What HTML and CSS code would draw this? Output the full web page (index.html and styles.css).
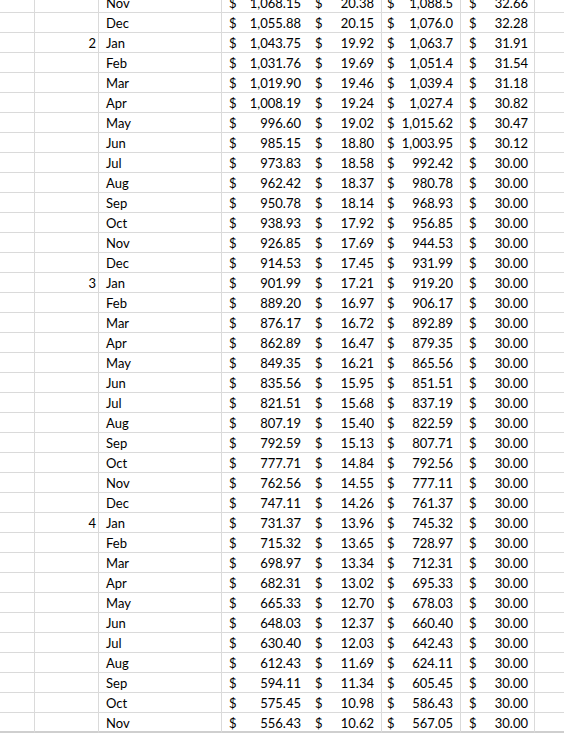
FILE: index.html
```html
<!DOCTYPE html>
<html>
<head>
<meta charset="utf-8">
<link rel="stylesheet" href="styles.css">
</head>
<body>
<div class="sheet">
  <div class="row first"><div class="c a"></div><div class="c b"></div><div class="c m">Nov</div><div class="c d"><span>$</span><span>1,068.15</span></div><div class="c e"><span>$</span><span>20.38</span></div><div class="c f"><span>$</span><span>1,088.5</span></div><div class="c g"><span>$</span><span>32.66</span></div><div class="c h"></div></div>
  <div class="row"><div class="c a"></div><div class="c b"></div><div class="c m">Dec</div><div class="c d"><span>$</span><span>1,055.88</span></div><div class="c e"><span>$</span><span>20.15</span></div><div class="c f"><span>$</span><span>1,076.0</span></div><div class="c g"><span>$</span><span>32.28</span></div><div class="c h"></div></div>
  <div class="row"><div class="c a"></div><div class="c b">2</div><div class="c m">Jan</div><div class="c d"><span>$</span><span>1,043.75</span></div><div class="c e"><span>$</span><span>19.92</span></div><div class="c f"><span>$</span><span>1,063.7</span></div><div class="c g"><span>$</span><span>31.91</span></div><div class="c h"></div></div>
  <div class="row"><div class="c a"></div><div class="c b"></div><div class="c m">Feb</div><div class="c d"><span>$</span><span>1,031.76</span></div><div class="c e"><span>$</span><span>19.69</span></div><div class="c f"><span>$</span><span>1,051.4</span></div><div class="c g"><span>$</span><span>31.54</span></div><div class="c h"></div></div>
  <div class="row"><div class="c a"></div><div class="c b"></div><div class="c m">Mar</div><div class="c d"><span>$</span><span>1,019.90</span></div><div class="c e"><span>$</span><span>19.46</span></div><div class="c f"><span>$</span><span>1,039.4</span></div><div class="c g"><span>$</span><span>31.18</span></div><div class="c h"></div></div>
  <div class="row"><div class="c a"></div><div class="c b"></div><div class="c m">Apr</div><div class="c d"><span>$</span><span>1,008.19</span></div><div class="c e"><span>$</span><span>19.24</span></div><div class="c f"><span>$</span><span>1,027.4</span></div><div class="c g"><span>$</span><span>30.82</span></div><div class="c h"></div></div>
  <div class="row"><div class="c a"></div><div class="c b"></div><div class="c m">May</div><div class="c d"><span>$</span><span>996.60</span></div><div class="c e"><span>$</span><span>19.02</span></div><div class="c f"><span>$</span><span>1,015.62</span></div><div class="c g"><span>$</span><span>30.47</span></div><div class="c h"></div></div>
  <div class="row"><div class="c a"></div><div class="c b"></div><div class="c m">Jun</div><div class="c d"><span>$</span><span>985.15</span></div><div class="c e"><span>$</span><span>18.80</span></div><div class="c f"><span>$</span><span>1,003.95</span></div><div class="c g"><span>$</span><span>30.12</span></div><div class="c h"></div></div>
  <div class="row"><div class="c a"></div><div class="c b"></div><div class="c m">Jul</div><div class="c d"><span>$</span><span>973.83</span></div><div class="c e"><span>$</span><span>18.58</span></div><div class="c f"><span>$</span><span>992.42</span></div><div class="c g"><span>$</span><span>30.00</span></div><div class="c h"></div></div>
  <div class="row"><div class="c a"></div><div class="c b"></div><div class="c m">Aug</div><div class="c d"><span>$</span><span>962.42</span></div><div class="c e"><span>$</span><span>18.37</span></div><div class="c f"><span>$</span><span>980.78</span></div><div class="c g"><span>$</span><span>30.00</span></div><div class="c h"></div></div>
  <div class="row"><div class="c a"></div><div class="c b"></div><div class="c m">Sep</div><div class="c d"><span>$</span><span>950.78</span></div><div class="c e"><span>$</span><span>18.14</span></div><div class="c f"><span>$</span><span>968.93</span></div><div class="c g"><span>$</span><span>30.00</span></div><div class="c h"></div></div>
  <div class="row"><div class="c a"></div><div class="c b"></div><div class="c m">Oct</div><div class="c d"><span>$</span><span>938.93</span></div><div class="c e"><span>$</span><span>17.92</span></div><div class="c f"><span>$</span><span>956.85</span></div><div class="c g"><span>$</span><span>30.00</span></div><div class="c h"></div></div>
  <div class="row"><div class="c a"></div><div class="c b"></div><div class="c m">Nov</div><div class="c d"><span>$</span><span>926.85</span></div><div class="c e"><span>$</span><span>17.69</span></div><div class="c f"><span>$</span><span>944.53</span></div><div class="c g"><span>$</span><span>30.00</span></div><div class="c h"></div></div>
  <div class="row"><div class="c a"></div><div class="c b"></div><div class="c m">Dec</div><div class="c d"><span>$</span><span>914.53</span></div><div class="c e"><span>$</span><span>17.45</span></div><div class="c f"><span>$</span><span>931.99</span></div><div class="c g"><span>$</span><span>30.00</span></div><div class="c h"></div></div>
  <div class="row"><div class="c a"></div><div class="c b">3</div><div class="c m">Jan</div><div class="c d"><span>$</span><span>901.99</span></div><div class="c e"><span>$</span><span>17.21</span></div><div class="c f"><span>$</span><span>919.20</span></div><div class="c g"><span>$</span><span>30.00</span></div><div class="c h"></div></div>
  <div class="row"><div class="c a"></div><div class="c b"></div><div class="c m">Feb</div><div class="c d"><span>$</span><span>889.20</span></div><div class="c e"><span>$</span><span>16.97</span></div><div class="c f"><span>$</span><span>906.17</span></div><div class="c g"><span>$</span><span>30.00</span></div><div class="c h"></div></div>
  <div class="row"><div class="c a"></div><div class="c b"></div><div class="c m">Mar</div><div class="c d"><span>$</span><span>876.17</span></div><div class="c e"><span>$</span><span>16.72</span></div><div class="c f"><span>$</span><span>892.89</span></div><div class="c g"><span>$</span><span>30.00</span></div><div class="c h"></div></div>
  <div class="row"><div class="c a"></div><div class="c b"></div><div class="c m">Apr</div><div class="c d"><span>$</span><span>862.89</span></div><div class="c e"><span>$</span><span>16.47</span></div><div class="c f"><span>$</span><span>879.35</span></div><div class="c g"><span>$</span><span>30.00</span></div><div class="c h"></div></div>
  <div class="row"><div class="c a"></div><div class="c b"></div><div class="c m">May</div><div class="c d"><span>$</span><span>849.35</span></div><div class="c e"><span>$</span><span>16.21</span></div><div class="c f"><span>$</span><span>865.56</span></div><div class="c g"><span>$</span><span>30.00</span></div><div class="c h"></div></div>
  <div class="row"><div class="c a"></div><div class="c b"></div><div class="c m">Jun</div><div class="c d"><span>$</span><span>835.56</span></div><div class="c e"><span>$</span><span>15.95</span></div><div class="c f"><span>$</span><span>851.51</span></div><div class="c g"><span>$</span><span>30.00</span></div><div class="c h"></div></div>
  <div class="row"><div class="c a"></div><div class="c b"></div><div class="c m">Jul</div><div class="c d"><span>$</span><span>821.51</span></div><div class="c e"><span>$</span><span>15.68</span></div><div class="c f"><span>$</span><span>837.19</span></div><div class="c g"><span>$</span><span>30.00</span></div><div class="c h"></div></div>
  <div class="row"><div class="c a"></div><div class="c b"></div><div class="c m">Aug</div><div class="c d"><span>$</span><span>807.19</span></div><div class="c e"><span>$</span><span>15.40</span></div><div class="c f"><span>$</span><span>822.59</span></div><div class="c g"><span>$</span><span>30.00</span></div><div class="c h"></div></div>
  <div class="row"><div class="c a"></div><div class="c b"></div><div class="c m">Sep</div><div class="c d"><span>$</span><span>792.59</span></div><div class="c e"><span>$</span><span>15.13</span></div><div class="c f"><span>$</span><span>807.71</span></div><div class="c g"><span>$</span><span>30.00</span></div><div class="c h"></div></div>
  <div class="row"><div class="c a"></div><div class="c b"></div><div class="c m">Oct</div><div class="c d"><span>$</span><span>777.71</span></div><div class="c e"><span>$</span><span>14.84</span></div><div class="c f"><span>$</span><span>792.56</span></div><div class="c g"><span>$</span><span>30.00</span></div><div class="c h"></div></div>
  <div class="row"><div class="c a"></div><div class="c b"></div><div class="c m">Nov</div><div class="c d"><span>$</span><span>762.56</span></div><div class="c e"><span>$</span><span>14.55</span></div><div class="c f"><span>$</span><span>777.11</span></div><div class="c g"><span>$</span><span>30.00</span></div><div class="c h"></div></div>
  <div class="row"><div class="c a"></div><div class="c b"></div><div class="c m">Dec</div><div class="c d"><span>$</span><span>747.11</span></div><div class="c e"><span>$</span><span>14.26</span></div><div class="c f"><span>$</span><span>761.37</span></div><div class="c g"><span>$</span><span>30.00</span></div><div class="c h"></div></div>
  <div class="row"><div class="c a"></div><div class="c b">4</div><div class="c m">Jan</div><div class="c d"><span>$</span><span>731.37</span></div><div class="c e"><span>$</span><span>13.96</span></div><div class="c f"><span>$</span><span>745.32</span></div><div class="c g"><span>$</span><span>30.00</span></div><div class="c h"></div></div>
  <div class="row"><div class="c a"></div><div class="c b"></div><div class="c m">Feb</div><div class="c d"><span>$</span><span>715.32</span></div><div class="c e"><span>$</span><span>13.65</span></div><div class="c f"><span>$</span><span>728.97</span></div><div class="c g"><span>$</span><span>30.00</span></div><div class="c h"></div></div>
  <div class="row"><div class="c a"></div><div class="c b"></div><div class="c m">Mar</div><div class="c d"><span>$</span><span>698.97</span></div><div class="c e"><span>$</span><span>13.34</span></div><div class="c f"><span>$</span><span>712.31</span></div><div class="c g"><span>$</span><span>30.00</span></div><div class="c h"></div></div>
  <div class="row"><div class="c a"></div><div class="c b"></div><div class="c m">Apr</div><div class="c d"><span>$</span><span>682.31</span></div><div class="c e"><span>$</span><span>13.02</span></div><div class="c f"><span>$</span><span>695.33</span></div><div class="c g"><span>$</span><span>30.00</span></div><div class="c h"></div></div>
  <div class="row"><div class="c a"></div><div class="c b"></div><div class="c m">May</div><div class="c d"><span>$</span><span>665.33</span></div><div class="c e"><span>$</span><span>12.70</span></div><div class="c f"><span>$</span><span>678.03</span></div><div class="c g"><span>$</span><span>30.00</span></div><div class="c h"></div></div>
  <div class="row"><div class="c a"></div><div class="c b"></div><div class="c m">Jun</div><div class="c d"><span>$</span><span>648.03</span></div><div class="c e"><span>$</span><span>12.37</span></div><div class="c f"><span>$</span><span>660.40</span></div><div class="c g"><span>$</span><span>30.00</span></div><div class="c h"></div></div>
  <div class="row"><div class="c a"></div><div class="c b"></div><div class="c m">Jul</div><div class="c d"><span>$</span><span>630.40</span></div><div class="c e"><span>$</span><span>12.03</span></div><div class="c f"><span>$</span><span>642.43</span></div><div class="c g"><span>$</span><span>30.00</span></div><div class="c h"></div></div>
  <div class="row"><div class="c a"></div><div class="c b"></div><div class="c m">Aug</div><div class="c d"><span>$</span><span>612.43</span></div><div class="c e"><span>$</span><span>11.69</span></div><div class="c f"><span>$</span><span>624.11</span></div><div class="c g"><span>$</span><span>30.00</span></div><div class="c h"></div></div>
  <div class="row"><div class="c a"></div><div class="c b"></div><div class="c m">Sep</div><div class="c d"><span>$</span><span>594.11</span></div><div class="c e"><span>$</span><span>11.34</span></div><div class="c f"><span>$</span><span>605.45</span></div><div class="c g"><span>$</span><span>30.00</span></div><div class="c h"></div></div>
  <div class="row"><div class="c a"></div><div class="c b"></div><div class="c m">Oct</div><div class="c d"><span>$</span><span>575.45</span></div><div class="c e"><span>$</span><span>10.98</span></div><div class="c f"><span>$</span><span>586.43</span></div><div class="c g"><span>$</span><span>30.00</span></div><div class="c h"></div></div>
  <div class="row last"><div class="c a"></div><div class="c b"></div><div class="c m">Nov</div><div class="c d"><span>$</span><span>556.43</span></div><div class="c e"><span>$</span><span>10.62</span></div><div class="c f"><span>$</span><span>567.05</span></div><div class="c g"><span>$</span><span>30.00</span></div><div class="c h"></div></div>
</div>
</body>
</html>
```

FILE: styles.css
```css
html, body {
  margin: 0;
  padding: 0;
  background: #ffffff;
}

body {
  font-family: "Lato", "Liberation Sans", sans-serif;
  font-size: 13px;
  color: #000000;
  overflow: hidden;
}

.sheet {
  width: 564px;
  height: 733px;
  overflow: hidden;
}

.row {
  display: grid;
  grid-template-columns: 35px 64px 123px 86px 74px 79px 74px 1fr;
  height: 20px;
  box-sizing: border-box;
}

.row.first {
  height: 13px;
}

.row.last {
  height: 21px;
}

.c {
  box-sizing: border-box;
  border-right: 1px solid #dadada;
  border-bottom: 1px solid #dadada;
  display: flex;
  align-items: flex-end;
  line-height: 15px;
  padding-bottom: 1px;
  white-space: nowrap;
  overflow: hidden;
}

.row.last .c {
  border-bottom: 3px solid #cfcfcf;
  padding-bottom: 0;
}

.c.d {
  border-right: none;
}

.c.h {
  border-right: none;
}

.c.b {
  justify-content: flex-end;
  padding-right: 2px;
}

.c.m {
  padding-left: 7px;
}

.c.d,
.c.e,
.c.f,
.c.g {
  justify-content: space-between;
  padding-left: 7px;
  padding-right: 7px;
}

.c.f {
  padding-left: 5px;
}

.c.g {
  padding-left: 8px;
  padding-right: 6px;
}
```
